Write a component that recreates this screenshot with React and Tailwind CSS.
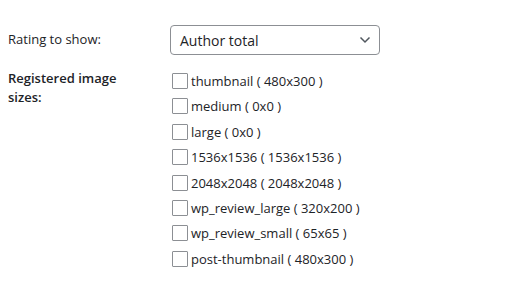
import React from "react";

const sizes = [
  "thumbnail ( 480x300 )",
  "medium ( 0x0 )",
  "large ( 0x0 )",
  "1536x1536 ( 1536x1536 )",
  "2048x2048 ( 2048x2048 )",
  "wp_review_large ( 320x200 )",
  "wp_review_small ( 65x65 )",
  "post-thumbnail ( 480x300 )",
];

export default function App() {
  return (
    <div
      className="w-[521px] h-[288px] bg-white text-[#1d2327] overflow-hidden"
      style={{ fontFamily: '"Open Sans", "Noto Sans", sans-serif' }}
    >
      <div className="flex pt-[25px] pl-[8px]">
        <div className="w-[162px] h-[30px] flex items-center text-[13px]">
          Rating to show:
        </div>
        <div className="w-[210px] h-[30px] border border-[#8c8f94] rounded-[4px] flex items-center justify-between pl-[9px] pr-[8px] text-[14px]">
          <span>Author total</span>
          <svg width="12" height="8" viewBox="0 0 12 8" fill="none">
            <path d="M1.5 1.5 L6 6 L10.5 1.5" stroke="#50575e" strokeWidth="1.5" />
          </svg>
        </div>
      </div>
      <div className="flex pt-[14px] pl-[8px]">
        <div className="w-[162px] shrink-0">
          <div className="w-[125px] text-[13px] font-semibold leading-[19px]">
            Registered image sizes:
          </div>
        </div>
        <div className="flex flex-col gap-[9.4px] pl-[2px] pt-[4px]">
          {sizes.map((s) => (
            <div key={s} className="flex items-center h-[16px] text-[13px]">
              <span className="w-[16px] h-[16px] border border-[#8c8f94] rounded-[1px] bg-white mr-[3px] shrink-0" />
              <span className="leading-[16px]">{s}</span>
            </div>
          ))}
        </div>
      </div>
    </div>
  );
}
